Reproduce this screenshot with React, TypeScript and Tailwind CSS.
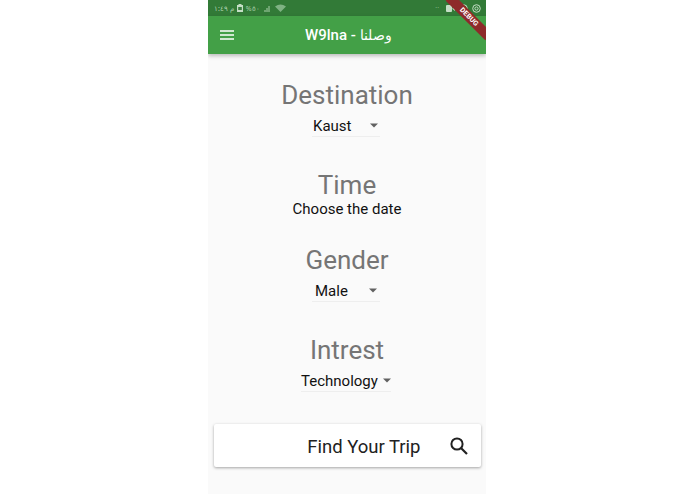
import React from "react";

const Heading = ({ children, className = "" }: { children: React.ReactNode; className?: string }) => (
  <div className={`text-[26px] leading-[32px] text-[#757575] ${className}`}>{children}</div>
);

const Caret = () => (
  <svg width="10" height="5" viewBox="0 0 10 5" className="block">
    <path d="M1 0.5h8L5 4.5z" fill="#616161" />
  </svg>
);

const Dropdown = ({ label, width, gap, pl }: { label: string; width: string; gap: string; pl: string }) => (
  <div className={`flex h-[22px] items-center border-b border-[#eeeeee] ${width} ${pl}`}>
    <span className="text-[15px] leading-[20px] text-[#111111]">{label}</span>
    <span className={gap}>
      <Caret />
    </span>
  </div>
);

export default function App() {
  return (
    <div className="flex h-[494px] w-[695px] justify-center overflow-hidden bg-white font-['Roboto',sans-serif]">
      <div className="relative mr-px flex h-full w-[278px] flex-col overflow-hidden bg-[#fafafa]">
        {/* status bar */}
        <div className="flex h-4 items-center justify-between bg-[#327a37] pl-[6px] pr-[5px] text-[#a9cfab]">
          <div className="flex items-center gap-[3px]">
            <span className="font-['Noto_Sans',sans-serif] text-[7px] leading-none">م ١:٤٩</span>
            <svg width="6" height="8" viewBox="0 0 6 8"><path d="M1.5 0h3v1H6v7H0V1h1.5z" fill="#c5dec6" /><rect x="1.2" y="3" width="3.6" height="3" fill="#3b7f40" /></svg>
            <span className="font-['Noto_Sans',sans-serif] text-[7px] leading-none">%٥٠</span>
            <svg width="8" height="7" viewBox="0 0 8 7" className="ml-[1px]"><path d="M1 7V5M3 7V3M5 7V1" stroke="#a9cfab" strokeWidth="1" /></svg>
            <svg width="11" height="8" viewBox="0 0 11 8"><path d="M0 2.4Q5.5-1.6 11 2.4L5.5 8z" fill="#7fb283" /></svg>
          </div>
          <div className="flex items-center gap-[4px]">
            <span className="mr-[3px] text-[7px] leading-none">··</span>
            <svg width="9" height="7" viewBox="0 0 9 7"><rect width="6" height="7" rx="1" fill="#c5dec6" /><path d="M6.5 3L9 1v5L6.500 4z" fill="#c5dec6" /></svg>
            <svg width="9" height="9" viewBox="0 0 9 9"><circle cx="4.500" cy="4.500" r="3.800" fill="none" stroke="#c5dec6" /></svg>
            <svg width="9" height="9" viewBox="0 0 9 9"><circle cx="4.500" cy="4.500" r="3.800" fill="none" stroke="#c5dec6" /><circle cx="4.500" cy="4.500" r="1.600" fill="none" stroke="#c5dec6" /></svg>
          </div>
        </div>

        {/* app bar */}
        <div className="flex h-[38px] items-center bg-[#43a047] pb-px pl-3 shadow-[0_2px_4px_rgba(0,0,0,0.25)]">
          <svg width="14" height="10" viewBox="0 0 14 10" className="shrink-0">
            <path d="M0 1h14M0 5h14M0 9h14" stroke="#ffffff" strokeWidth="1.400" />
          </svg>
          <div className="ml-[71px] whitespace-nowrap font-['Roboto','Noto_Sans',sans-serif] text-[15px] font-medium leading-[20px] text-white">
            W9lna - <span className="text-[13.5px] font-normal">وصلنا</span>
          </div>
        </div>

        {/* form */}
        <div className="flex flex-1 flex-col items-center pt-[25px]">
          <Heading>Destination</Heading>
          <div className="mr-[2px] mt-[4px]">
            <Dropdown label="Kaust" width="w-[68px]" gap="ml-[17px]" pl="pl-[1px]" />
          </div>

          <Heading className="mt-[32px]">Time</Heading>
          <div className="text-[15px] leading-[16px] text-[#111111]">Choose the date</div>

          <Heading className="mt-[27px]">Gender</Heading>
          <div className="mr-[2px] mt-[4px]">
            <Dropdown label="Male" width="w-[68px]" gap="ml-[20px]" pl="pl-[3px]" />
          </div>

          <Heading className="mt-[32px]">Intrest</Heading>
          <div className="mr-[2px] mt-[4px]">
            <Dropdown label="Technology" width="w-[90px]" gap="ml-[4px]" pl="pl-0" />
          </div>

          {/* button */}
          <div className="mt-[32px] flex h-[43px] w-[267px] items-center justify-end rounded-[2px] bg-white pr-[12px] shadow-[0_1px_3px_rgba(0,0,0,0.35)]">
            <span className="pt-[2px] text-[18.5px] leading-[24px] text-[#212121]">Find Your Trip</span>
            <svg width="20" height="20" viewBox="0 0 20 20" className="ml-[28px]">
              <circle cx="8" cy="8" r="5.600" fill="none" stroke="#212121" strokeWidth="2" />
              <path d="M12 12l6 6" stroke="#212121" strokeWidth="2.200" />
            </svg>
          </div>
        </div>

        {/* debug banner */}
        <div className="absolute right-[-11px] top-[12px] w-[56px] rotate-45 bg-[#8e2a2a] text-center text-[7px] font-bold leading-[10px] tracking-wide text-white">
          DEBUG
        </div>
      </div>
    </div>
  );
}
